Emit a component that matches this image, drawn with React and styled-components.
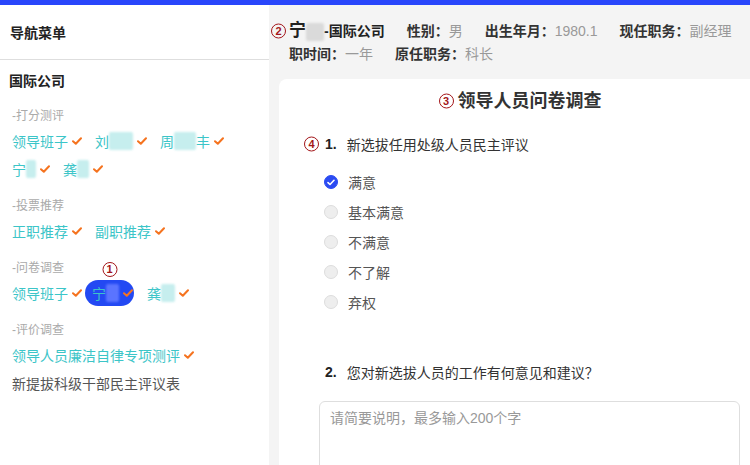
import React from "react";
import styled, { createGlobalStyle } from "styled-components";

const GlobalStyle = createGlobalStyle`
  html, body {
    margin: 0;
    padding: 0;
    overflow: hidden;
    background: #fff;
  }
  body {
    font-family: "Liberation Sans", "Noto Sans CJK SC", sans-serif;
    color: #333;
  }
  * {
    box-sizing: border-box;
  }
`;

const Viewport = styled.div`
  width: 750px;
  height: 465px;
  overflow: hidden;
`;

const TopBar = styled.div`
  height: 5px;
  width: 790px;
  background: #2946fb;
`;

const Layout = styled.div`
  display: flex;
  width: 790px;
  height: 460px;
`;

// sidebar
const Sidebar = styled.aside`
  width: 269px;
  flex-shrink: 0;
  background: #fff;
`;

const SideHeader = styled.div`
  height: 55px;
  padding-left: 10px;
  display: flex;
  align-items: center;
  font-size: 14px;
  font-weight: 700;
  color: #222;
  border-bottom: 1px solid #dedede;
`;

const SideBody = styled.div`
  padding: 11px 0 0 5px;
`;

const Company = styled.div`
  padding-left: 4px;
  height: 20px;
  line-height: 20px;
  font-size: 14px;
  font-weight: 700;
  color: #222;
  margin-bottom: 15px;
`;

const Section = styled.div`
  & + & {
    margin-top: 14px;
  }
`;

const SectionLabel = styled.div`
  padding-left: 7px;
  height: 20px;
  line-height: 20px;
  font-size: 12px;
  color: #aaa;
  margin-bottom: 2px;
`;

const ItemRow = styled.div`
  display: flex;
  flex-wrap: wrap;
  gap: 2px 4px;
`;

const NavItem = styled.span`
  position: relative;
  display: inline-flex;
  align-items: center;
  height: 26px;
  padding: 0 ${(p) => (p.$active ? 1 : 2)}px 0 7px;
  margin: 0 ${(p) => (p.$active ? 2 : 0)}px 0 ${(p) => (p.$active ? -3 : 0)}px;
  border-radius: 13px;
  font-size: 14px;
  color: ${(p) => (p.$plain ? "#555" : "#3cc5c8")};
  background: ${(p) => (p.$active ? "#2349f3" : "transparent")};
`;

const Blur = styled.span`
  display: inline-block;
  width: ${(p) => p.$w}px;
  height: ${(p) => p.$h || 18}px;
  background: ${(p) => p.$tone};
  filter: blur(1.2px);
  border-radius: 2px;
  vertical-align: middle;
`;

const CheckWrap = styled.span`
  display: inline-flex;
  margin-left: 4px;
`;

const Check = () => (
  <CheckWrap>
    <svg width="10" height="8" viewBox="0 0 10 8">
      <path d="M1 4.2 L3.8 6.8 L9 1.2" fill="none" stroke="#f5731f" strokeWidth="2" strokeLinecap="round" strokeLinejoin="round" />
    </svg>
  </CheckWrap>
);

const Mark = styled.span`
  display: inline-flex;
  align-items: center;
  justify-content: center;
  width: 15px;
  height: 15px;
  border: 1.6px solid #a3161a;
  border-radius: 50%;
  color: #a3161a;
  font-family: "Liberation Sans", sans-serif;
  font-size: 11px;
  font-weight: 700;
  line-height: 1;
`;

const TopMark = styled(Mark)`
  position: absolute;
  bottom: calc(100% + 3px);
  left: 50%;
  transform: translateX(-50%);
`;

const SideMark = styled(Mark)`
  position: absolute;
  right: calc(100% + ${(p) => p.$gap || 4}px);
  top: 50%;
  transform: translateY(-50%);
`;

// main
const Main = styled.main`
  flex: 1;
  background: #f4f4f4;
  display: flex;
  flex-direction: column;
`;

const InfoBar = styled.div`
  padding: 14px 20px 0;
  line-height: 23px;
  font-size: 14px;
  margin-bottom: 13px;
`;

const Name = styled.span`
  position: relative;
  font-weight: 700;
  color: #222;
  margin-right: 22px;
`;

const NameFirst = styled.span`
  font-size: 17px;
`;

const Field = styled.span`
  margin-right: 22px;
`;

const Label = styled.span`
  font-weight: 700;
  color: #333;
`;

const Value = styled.span`
  color: #999;
`;

const Card = styled.section`
  flex: 1;
  margin: 0 10px;
  background: #fff;
  border-radius: 8px 8px 0 0;
  padding: 10px 40px 0;
`;

const Title = styled.h2`
  margin: 0 0 20px;
  text-align: center;
  font-size: 18px;
  line-height: 24px;
  font-weight: 700;
  color: #333;
`;

const TitleText = styled.span`
  position: relative;
`;

const Question = styled.div`
  position: relative;
  display: flex;
  align-items: center;
  height: 22px;
  margin-left: 6px;
  margin-top: ${(p) => p.$top || 0}px;
  font-size: 14px;
  color: #333;
`;

const QNum = styled.span`
  position: relative;
  font-weight: 700;
  color: #222;
  margin-right: 10px;
`;

const Options = styled.div`
  margin-top: 12px;
  padding-left: 5px;
`;

const Option = styled.label`
  display: flex;
  align-items: center;
  height: 30px;
  font-size: 14px;
  color: #555;
`;

const Radio = styled.span`
  display: inline-flex;
  align-items: center;
  justify-content: center;
  width: 14px;
  height: 14px;
  margin-right: 10px;
  border-radius: 50%;
  background: ${(p) => (p.$checked ? "#2b4bf2" : "#eee")};
  border: 1px solid ${(p) => (p.$checked ? "#2b4bf2" : "#ddd")};
`;

const TextBox = styled.div`
  margin-top: 18px;
  height: 100px;
  border: 1px solid #dedede;
  border-radius: 6px;
  padding: 7px 10px;
  font-size: 14px;
  line-height: 18px;
  color: #999;
`;

const options = ["满意", "基本满意", "不满意", "不了解", "弃权"];

const teal = "rgba(120, 215, 215, 0.42)";

const App = () => (
  <Viewport>
    <GlobalStyle />
    <TopBar />
    <Layout>
      <Sidebar>
        <SideHeader>导航菜单</SideHeader>
        <SideBody>
          <Company>国际公司</Company>
          <Section>
            <SectionLabel>-打分测评</SectionLabel>
            <ItemRow>
              <NavItem>领导班子<Check /></NavItem>
              <NavItem>刘<Blur $w={24} $tone={teal} /><Check /></NavItem>
              <NavItem>周<Blur $w={22} $tone={teal} />丰<Check /></NavItem>
              <NavItem>宁<Blur $w={10} $tone={teal} /><Check /></NavItem>
              <NavItem>龚<Blur $w={12} $tone={teal} /><Check /></NavItem>
            </ItemRow>
          </Section>
          <Section>
            <SectionLabel>-投票推荐</SectionLabel>
            <ItemRow>
              <NavItem>正职推荐<Check /></NavItem>
              <NavItem>副职推荐<Check /></NavItem>
            </ItemRow>
          </Section>
          <Section>
            <SectionLabel>-问卷调查</SectionLabel>
            <ItemRow>
              <NavItem>领导班子<Check /></NavItem>
              <NavItem $active>
                <TopMark>1</TopMark>
                宁<Blur $w={13} $tone="#5a74ff" />
                <Check />
              </NavItem>
              <NavItem>龚<Blur $w={14} $tone={teal} /><Check /></NavItem>
            </ItemRow>
          </Section>
          <Section>
            <SectionLabel>-评价调查</SectionLabel>
            <ItemRow>
              <NavItem>领导人员廉洁自律专项测评<Check /></NavItem>
              <NavItem $plain>新提拔科级干部民主评议表</NavItem>
            </ItemRow>
          </Section>
        </SideBody>
      </Sidebar>

      <Main>
        <InfoBar>
          <Name>
            <SideMark $gap={3}>2</SideMark>
            <NameFirst>宁</NameFirst>
            <Blur $w={18} $tone="#dadada" />
            -国际公司
          </Name>
          <Field><Label>性别：</Label><Value>男</Value></Field>
          <Field><Label>出生年月：</Label><Value>1980.1</Value></Field>
          <Field><Label>现任职务：</Label><Value>副经理</Value></Field>
          <Field><Label>任职时间：</Label><Value>一年</Value></Field>
          <Field><Label>原任职务：</Label><Value>科长</Value></Field>
        </InfoBar>

        <Card>
          <Title>
            <TitleText>
              <SideMark $gap={4}>3</SideMark>
              领导人员问卷调查
            </TitleText>
          </Title>

          <Question>
            <QNum>
              <SideMark $gap={6}>4</SideMark>
              1.
            </QNum>
            新选拔任用处级人员民主评议
          </Question>
          <Options>
            {options.map((o, i) => (
              <Option key={o}>
                <Radio $checked={i === 0}>
                  {i === 0 && (
                    <svg width="8" height="7" viewBox="0 0 8 7">
                      <path d="M1 3.6 L3 5.5 L7 1.3" fill="none" stroke="#fff" strokeWidth="1.6" strokeLinecap="round" strokeLinejoin="round" />
                    </svg>
                  )}
                </Radio>
                {o}
              </Option>
            ))}
          </Options>

          <Question $top={44}>
            <QNum>2.</QNum>
            您对新选拔人员的工作有何意见和建议？
          </Question>
          <TextBox>请简要说明，最多输入200个字</TextBox>
        </Card>
      </Main>
    </Layout>
  </Viewport>
);

export default App;
